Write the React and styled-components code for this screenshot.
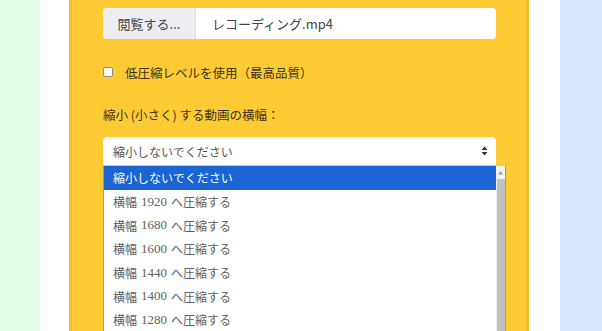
import React from "react";
import styled, { createGlobalStyle } from "styled-components";

const Global = createGlobalStyle`
  html, body { margin: 0; padding: 0; }
  body {
    width: 602px; height: 331px; overflow: hidden;
    font-family: "Noto Sans CJK JP", "Noto Sans", sans-serif;
  }
`;

const Page = styled.div`
  display: flex;
  width: 602px;
  height: 331px;
  overflow: hidden;
  background: #ffffff;
`;

const Side = styled.div`
  flex: none;
  width: ${p => p.$w}px;
  background: ${p => p.$bg};
`;

const Panel = styled.div`
  flex: none;
  width: 460px;
  box-sizing: border-box;
  background: #fecb34;
  border-left: 3px solid #f2bf22;
  border-right: 3px solid #f2bf22;
  padding: 8px 30px 0 31px;
  display: flex;
  flex-direction: column;
`;

const FileRow = styled.div`
  display: flex;
  height: 31px;
  width: 393px;
  border-radius: 4px;
  overflow: hidden;
  background: #fff;
`;

const BrowseBtn = styled.div`
  flex: none;
  width: 92px;
  display: flex;
  align-items: center;
  justify-content: center;
  background: #eceef1;
  color: #444;
  font-size: 13px;
  border-right: 1px solid #dde0e4;
`;

const FileName = styled.div`
  flex: 1;
  display: flex;
  align-items: center;
  padding-left: 16px;
  color: #444;
  font-size: 13px;
`;

const CheckRow = styled.label`
  display: flex;
  align-items: center;
  margin-top: 25px;
  height: 16px;
  color: #3b3320;
  font-size: 12.5px;
`;

const Box = styled.span`
  flex: none;
  width: 8px;
  height: 8px;
  border: 1px solid #8d8d8d;
  border-radius: 2px;
  background: #fff;
  margin-right: 12px;
`;

const FieldLabel = styled.div`
  margin-top: 27px;
  height: 16px;
  line-height: 16px;
  color: #3b3320;
  font-size: 12.5px;
`;

const SelectWrap = styled.div`
  position: relative;
  margin-top: 14px;
  width: 393px;
`;

const SelectBox = styled.div`
  height: 28px;
  box-sizing: border-box;
  background: #fff;
  border-radius: 4px 4px 0 0;
  display: flex;
  align-items: center;
  padding: 0 8px 0 10px;
  color: #555;
  font-size: 12px;
`;

const SelectText = styled.span`
  flex: 1;
`;

const List = styled.div`
  position: absolute;
  left: 0;
  top: 28px;
  width: 403px;
  height: 170px;
  background: #fff;
  border: 1px solid #9a9a9a;
  border-top-color: #c8c8c8;
  box-sizing: border-box;
  display: flex;
  overflow: hidden;
`;

const Options = styled.div`
  flex: 1;
  display: flex;
  flex-direction: column;
`;

const Option = styled.div`
  height: 23.7px;
  flex: none;
  display: flex;
  align-items: center;
  padding-left: 9px;
  font-size: 12px;
  color: ${p => (p.$sel ? "#fff" : "#5f5f5f")};
  background: ${p => (p.$sel ? "#1a64d3" : "transparent")};
`;

const Num = styled.span`
  font-family: "Liberation Serif", "DejaVu Serif", serif;
  font-size: 13px;
  margin: 0 4px;
`;

const Scrollbar = styled.div`
  flex: none;
  width: 9px;
  background: #f1f1f1;
  display: flex;
  flex-direction: column;
  align-items: center;
`;

const Thumb = styled.div`
  margin-top: 3px;
  width: 8px;
  flex: 1;
  background: #c1c1c1;
`;

const widths = [1920, 1680, 1600, 1440, 1400, 1280];

export default function App() {
  return (
    <>
      <Global />
      <Page>
        <Side $w={40} $bg="#e3fde8" />
        <Side $w={29} $bg="#ffffff" />
        <Panel>
          <FileRow>
            <BrowseBtn>閲覧する...</BrowseBtn>
            <FileName>レコーディング.mp4</FileName>
          </FileRow>
          <CheckRow>
            <Box />
            低圧縮レベルを使用（最高品質）
          </CheckRow>
          <FieldLabel>縮小 (小さく) する動画の横幅：</FieldLabel>
          <SelectWrap>
            <SelectBox>
              <SelectText>縮小しないでください</SelectText>
              <svg width="7" height="10" viewBox="0 0 7 10">
                <path d="M3.5 0.5 L6.5 4 H0.5 Z" fill="#333" />
                <path d="M3.5 9.5 L6.5 6 H0.5 Z" fill="#333" />
              </svg>
            </SelectBox>
            <List>
              <Options>
                <Option $sel>縮小しないでください</Option>
                {widths.map(w => (
                  <Option key={w}>
                    横幅<Num>{w}</Num>へ圧縮する
                  </Option>
                ))}
              </Options>
              <Scrollbar>
                <svg width="7" height="6" viewBox="0 0 7 6" style={{ marginTop: 4 }}>
                  <path d="M3.5 1 L6 4.5 H1 Z" fill="#a3a3a3" />
                </svg>
                <Thumb />
              </Scrollbar>
            </List>
          </SelectWrap>
        </Panel>
        <Side $w={31} $bg="#ffffff" />
        <Side $w={42} $bg="#d7e7fb" />
      </Page>
    </>
  );
}
